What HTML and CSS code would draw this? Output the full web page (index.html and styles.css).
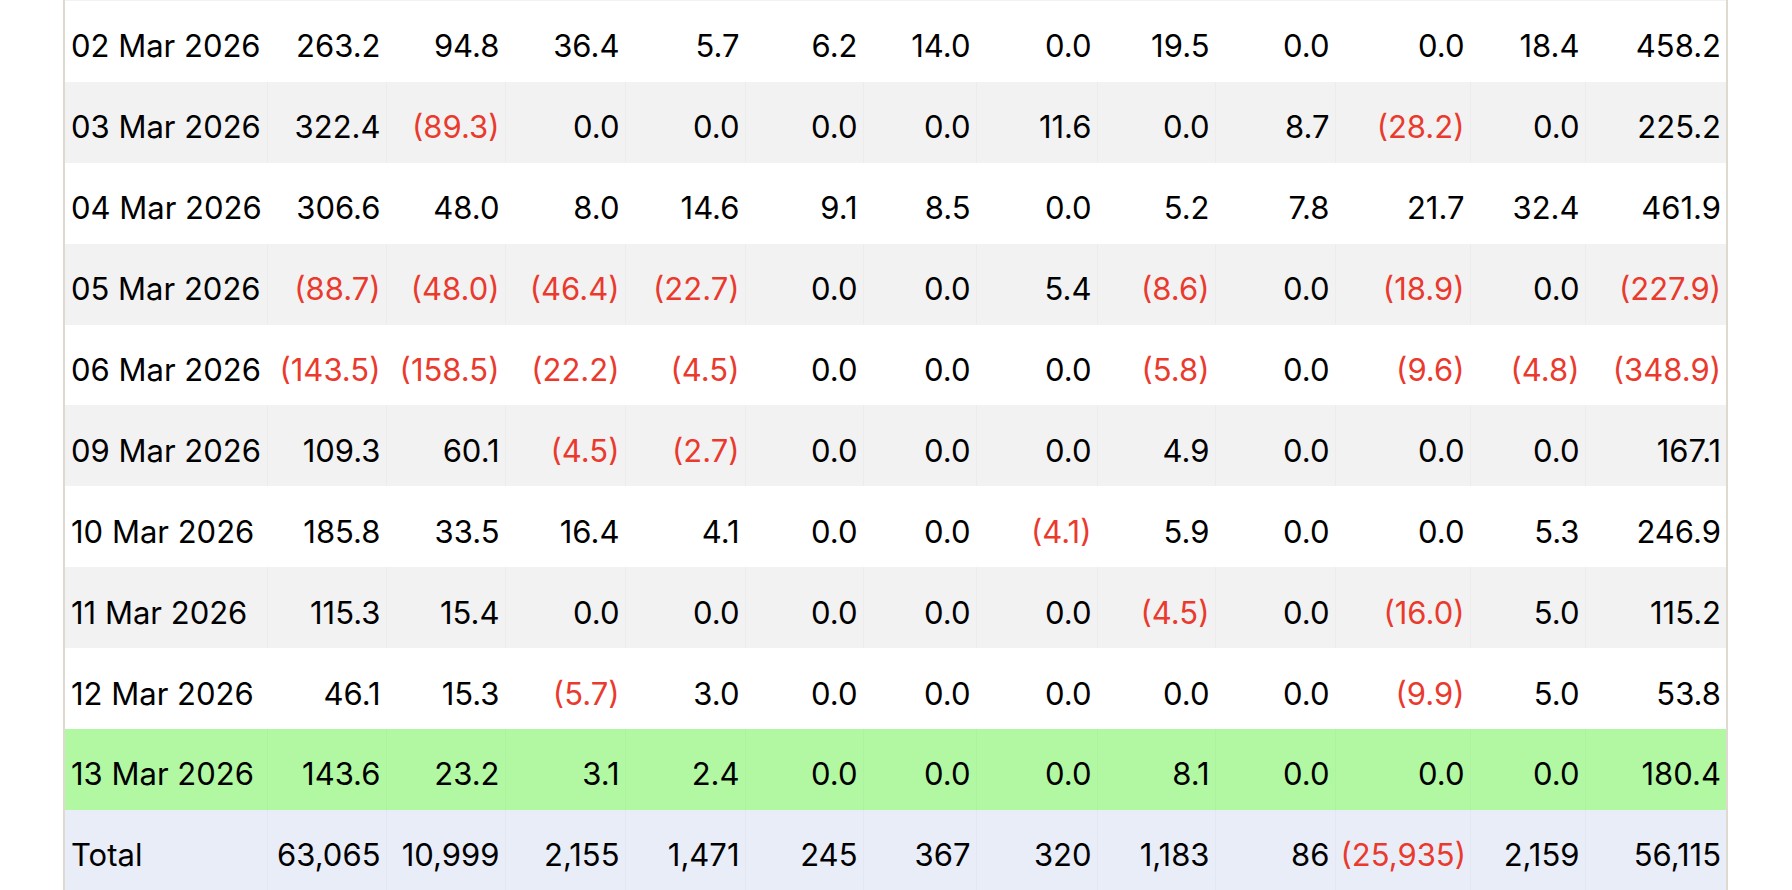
FILE: index.html
```html
<!DOCTYPE html>
<html lang="en">
<head>
<meta charset="utf-8">
<title>Daily flows</title>
<link rel="stylesheet" href="styles.css">
</head>
<body>
<div class="frame">
  <div class="cutoff"></div>
  <table class="flows">
    <colgroup>
      <col class="c-date">
      <col class="c119"><col class="c119"><col class="c120"><col class="c120">
      <col class="c118"><col class="c113"><col class="c121"><col class="c118">
      <col class="c120"><col class="c135"><col class="c115"><col class="c141">
    </colgroup>
    <tbody>
      <tr><td>02 Mar 2026</td><td>263.2</td><td>94.8</td><td>36.4</td><td>5.7</td><td>6.2</td><td>14.0</td><td>0.0</td><td>19.5</td><td>0.0</td><td>0.0</td><td>18.4</td><td>458.2</td></tr>
      <tr class="alt"><td>03 Mar 2026</td><td>322.4</td><td class="neg">(89.3)</td><td>0.0</td><td>0.0</td><td>0.0</td><td>0.0</td><td>11.6</td><td>0.0</td><td>8.7</td><td class="neg">(28.2)</td><td>0.0</td><td>225.2</td></tr>
      <tr><td>04 Mar 2026</td><td>306.6</td><td>48.0</td><td>8.0</td><td>14.6</td><td>9.1</td><td>8.5</td><td>0.0</td><td>5.2</td><td>7.8</td><td>21.7</td><td>32.4</td><td>461.9</td></tr>
      <tr class="alt"><td>05 Mar 2026</td><td class="neg">(88.7)</td><td class="neg">(48.0)</td><td class="neg">(46.4)</td><td class="neg">(22.7)</td><td>0.0</td><td>0.0</td><td>5.4</td><td class="neg">(8.6)</td><td>0.0</td><td class="neg">(18.9)</td><td>0.0</td><td class="neg">(227.9)</td></tr>
      <tr><td>06 Mar 2026</td><td class="neg">(143.5)</td><td class="neg">(158.5)</td><td class="neg">(22.2)</td><td class="neg">(4.5)</td><td>0.0</td><td>0.0</td><td>0.0</td><td class="neg">(5.8)</td><td>0.0</td><td class="neg">(9.6)</td><td class="neg">(4.8)</td><td class="neg">(348.9)</td></tr>
      <tr class="alt"><td>09 Mar 2026</td><td>109.3</td><td>60.1</td><td class="neg">(4.5)</td><td class="neg">(2.7)</td><td>0.0</td><td>0.0</td><td>0.0</td><td>4.9</td><td>0.0</td><td>0.0</td><td>0.0</td><td>167.1</td></tr>
      <tr><td>10 Mar 2026</td><td>185.8</td><td>33.5</td><td>16.4</td><td>4.1</td><td>0.0</td><td>0.0</td><td class="neg">(4.1)</td><td>5.9</td><td>0.0</td><td>0.0</td><td>5.3</td><td>246.9</td></tr>
      <tr class="alt"><td>11 Mar 2026</td><td>115.3</td><td>15.4</td><td>0.0</td><td>0.0</td><td>0.0</td><td>0.0</td><td>0.0</td><td class="neg">(4.5)</td><td>0.0</td><td class="neg">(16.0)</td><td>5.0</td><td>115.2</td></tr>
      <tr><td>12 Mar 2026</td><td>46.1</td><td>15.3</td><td class="neg">(5.7)</td><td>3.0</td><td>0.0</td><td>0.0</td><td>0.0</td><td>0.0</td><td>0.0</td><td class="neg">(9.9)</td><td>5.0</td><td>53.8</td></tr>
      <tr class="today"><td>13 Mar 2026</td><td>143.6</td><td>23.2</td><td>3.1</td><td>2.4</td><td>0.0</td><td>0.0</td><td>0.0</td><td>8.1</td><td>0.0</td><td>0.0</td><td>0.0</td><td>180.4</td></tr>
      <tr class="total"><td>Total</td><td>63,065</td><td>10,999</td><td>2,155</td><td>1,471</td><td>245</td><td>367</td><td>320</td><td>1,183</td><td>86</td><td class="neg">(25,935)</td><td>2,159</td><td>56,115</td></tr>
    </tbody>
  </table>
</div>
</body>
</html>
```

FILE: styles.css
```css
html, body {
  margin: 0;
  padding: 0;
  background: #ffffff;
}

body {
  font-family: Inter, "Noto Sans", "Liberation Sans", sans-serif;
  color: #000000;
  overflow: hidden;
}

.frame {
  margin-left: 63px;
  width: 1661px;
  border-left: 2px solid #dedad0;
  border-right: 2px solid #dedad0;
  height: 890px;
}

.cutoff {
  height: 1px;
  background: #f2f2f2;
}

.flows {
  width: 1661px;
  table-layout: fixed;
  border-collapse: collapse;
  font-size: 31px;
}

.c-date { width: 202px; }
.c113 { width: 113px; }
.c115 { width: 115px; }
.c118 { width: 118px; }
.c119 { width: 119px; }
.c120 { width: 120px; }
.c121 { width: 121px; }
.c135 { width: 135px; }
.c141 { width: 141px; }

.flows td {
  height: 80.9px;
  padding: 9px 5px 0 5px;
  box-sizing: border-box;
  text-align: right;
  white-space: nowrap;
  vertical-align: middle;
  border-left: 1px solid transparent;
}

.flows td:first-child {
  text-align: left;
  border-left: none;
  padding-left: 6px;
}

.flows tr.alt td,
.flows tr.today td,
.flows tr.total td {
  border-left-color: rgba(0, 0, 0, 0.025);
}

.flows tr.alt td { background: #f2f2f2; }
.flows tr.today td { background: #b2f8a2; }
.flows tr.total td { background: #e9edf8; }

.flows td:first-child { border-left: none; }

.flows td.neg { color: #ea3a2e; }
```
